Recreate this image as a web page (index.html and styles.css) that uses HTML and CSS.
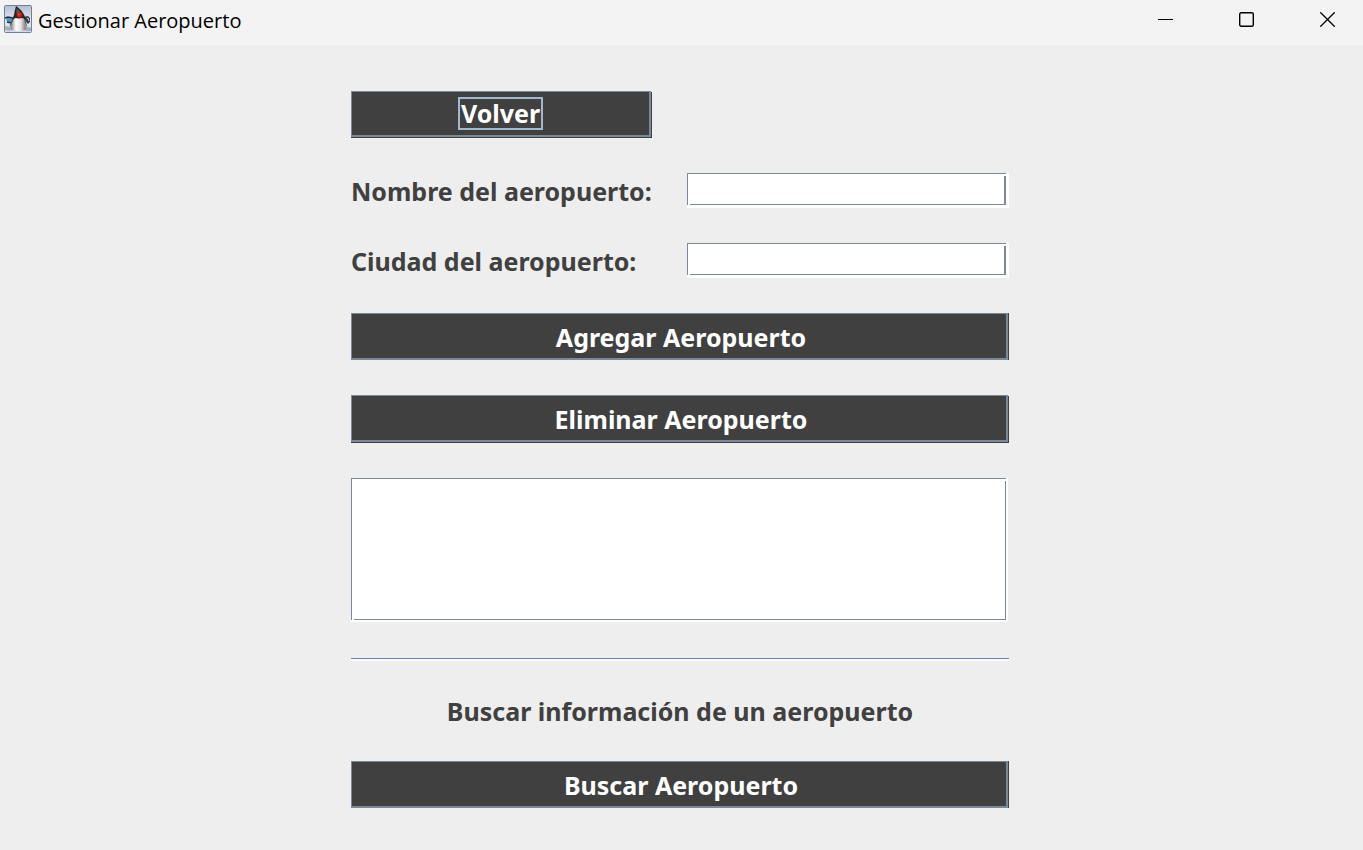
FILE: index.html
```html
<!DOCTYPE html>
<html lang="es">
<head>
<meta charset="utf-8">
<title>Gestionar Aeropuerto</title>
<link rel="stylesheet" href="styles.css">
</head>
<body>
<header class="titlebar">
  <svg class="app-icon" viewBox="0 0 28 28" aria-hidden="true">
    <defs>
      <linearGradient id="sky" x1="0" y1="0" x2="0" y2="1">
        <stop offset="0" stop-color="#b4bfd4"/>
        <stop offset=".55" stop-color="#e6e8f0"/>
        <stop offset="1" stop-color="#d5d8e3"/>
      </linearGradient>
      <linearGradient id="belly" x1="0" y1="0" x2="1" y2="0">
        <stop offset="0" stop-color="#777"/>
        <stop offset=".35" stop-color="#fff"/>
        <stop offset=".65" stop-color="#e6e6e6"/>
        <stop offset="1" stop-color="#777"/>
      </linearGradient>
      <radialGradient id="nose" cx=".4" cy=".35">
        <stop offset="0" stop-color="#ff3a2e"/>
        <stop offset="1" stop-color="#c91010"/>
      </radialGradient>
    </defs>
    <rect x=".5" y=".5" width="27" height="27" rx="1" fill="url(#sky)" stroke="#6b8299"/>
    <path d="M1 21l6 1-1 4-5-1zM22 21l5 2v3h-5z" fill="#a9aebd"/>
    <path d="M2 13l6-1 2 3-3 3-4-1z" fill="#4c9ac5"/>
    <path d="M1 13l3-1 5 1M3 17l4 1 3-3" stroke="#28343d" stroke-width="1.5" fill="none"/>
    <path d="M19 12l5-1 2 2v4l-2 2-3-3z" fill="#3c4248"/>
    <path d="M23 14l1-1 1 3" stroke="#c0c6cc" fill="none"/>
    <path d="M10 12c-1 4-4 8-3.500 12 0 2 3 1 5 1.500l3.500 1 4-1c2 0 3.500 0 3-3l-2-10.500z" fill="url(#belly)"/>
    <path d="M12 1c-1 3-1.500 6-2 9l-2.500 6 3.500-3 4 .5 4-.5 3 2c-1-5-4-10-10-14z" fill="#262626"/>
    <path d="M12.500 3l4 4-4 2z" fill="#555"/>
    <path d="M9 14l-3 7M20.500 14l2 7" stroke="#555" fill="none"/>
    <circle cx="15.500" cy="10" r="2.800" fill="url(#nose)"/>
  </svg>
  <h1 class="window-title">Gestionar Aeropuerto</h1>
  <div class="window-controls">
    <button class="control" type="button" aria-label="Minimizar">
      <svg class="glyph" viewBox="0 0 15 15"><path d="M0 7.5h15"/></svg>
    </button>
    <button class="control" type="button" aria-label="Maximizar">
      <svg class="glyph" viewBox="0 0 15 15"><rect x=".7" y=".7" width="13.6" height="13.6" rx="1.5" stroke-width="1.4"/></svg>
    </button>
    <button class="control" type="button" aria-label="Cerrar">
      <svg class="glyph" viewBox="0 0 15 15"><path d="M.3.3l14.4 14.4M14.7.3L.3 14.7" stroke-width="1.3"/></svg>
    </button>
  </div>
</header>
<main class="content">
  <form class="form">
    <button class="action back shadowed" type="button"><span class="focus">Volver</span></button>
    <label class="label start" for="nombre">Nombre del aeropuerto:</label>
    <input class="field" id="nombre" type="text">
    <label class="label start" for="ciudad">Ciudad del aeropuerto:</label>
    <input class="field" id="ciudad" type="text">
    <button class="action wide" type="button">Agregar Aeropuerto</button>
    <button class="action wide shadowed" type="button">Eliminar Aeropuerto</button>
    <textarea class="output wide" aria-label="Aeropuertos"></textarea>
    <hr class="separator wide">
    <h2 class="label wide">Buscar información de un aeropuerto</h2>
    <button class="action wide" type="button">Buscar Aeropuerto</button>
  </form>
</main>
</body>
</html>
```
FILE: styles.css
```css
* {
  box-sizing: border-box;
}

body {
  --dark: #404040;
  --line: #7a8a99;
  margin: 0;
  min-height: 100vh;
  background: #eee;
  color: var(--dark);
  font: bold 25px/30px "Noto Sans", "DejaVu Sans", sans-serif;
}

.titlebar {
  display: flex;
  align-items: flex-start;
  height: 45px;
  background: #f3f3f3;
}

.app-icon {
  width: 28px;
  height: 28px;
  margin: 5px 6px 0 4px;
}

.window-title {
  margin: 0;
  color: #000;
  font: 20px/42px "Open Sans", "Noto Sans", sans-serif;
}

.window-controls {
  display: flex;
  gap: 10px;
  margin-left: auto;
}

.control {
  display: flex;
  align-items: center;
  justify-content: center;
  width: 71px;
  height: 39px;
  padding: 0;
  border: 0;
  background: none;
}

.glyph {
  width: 15px;
  height: 15px;
  fill: none;
  stroke: #000;
}

.content {
  display: flex;
  justify-content: center;
  padding: 46px 3px 42px 0;
}

.form {
  display: grid;
  grid-template-columns: 301px 322px;
  gap: 35px;
}

.wide {
  grid-column: 1 / -1;
}

.action {
  height: 47px;
  margin-right: 1px;
  padding: 2px 0 0 4px;
  border: solid var(--line);
  border-width: 1px 2px 2px 1px;
  background: var(--dark);
  box-shadow: 1px 0 0 var(--dark);
  color: #fff;
  font: inherit;
}

.shadowed {
  margin-bottom: 1px;
  box-shadow: 1px 1px 0 var(--dark), 0 1px 0 var(--dark);
}

.back {
  height: 46px;
  padding: 0;
}

.back + .label {
  grid-column: 1;
}

.focus {
  display: inline-block;
  padding: 0 1px;
  border: 2px solid #a3b8cc;
  line-height: 29px;
}

.label {
  margin: 0;
  font: inherit;
  text-align: center;
  white-space: nowrap;
}

.start {
  align-self: center;
  text-align: left;
}

/* Etched frame: a grey outline with a white lip at the right and bottom. */
.field,
.output {
  --ink: linear-gradient(var(--line), var(--line));
  border: 0;
  background:
    var(--ink) 0 0 / calc(100% - var(--lip)) 1px no-repeat,
    var(--ink) 0 0 / 1px calc(100% - var(--lip)) no-repeat,
    var(--ink) right var(--lip) top 3px / var(--edge) calc(100% - 3px - var(--lip)) no-repeat,
    var(--ink) left 3px bottom var(--lip) / calc(100% - 3px - var(--lip)) 1px no-repeat,
    #fff;
  color: #333;
  font: 25px/30px "Noto Sans", sans-serif;
}

.field {
  --lip: 3px;
  --edge: 2px;
  width: 100%;
  height: 35px;
  padding: 0 6px;
}

.output {
  --lip: 2px;
  --edge: 1px;
  height: 144px;
  margin: 0 1px 1px 0;
  padding: 3px 6px;
  resize: none;
}

.separator {
  width: 100%;
  height: 3px;
  margin: 0;
  border: 0;
  border-top: 1px solid #6382bf;
  background: #fff;
}
```
